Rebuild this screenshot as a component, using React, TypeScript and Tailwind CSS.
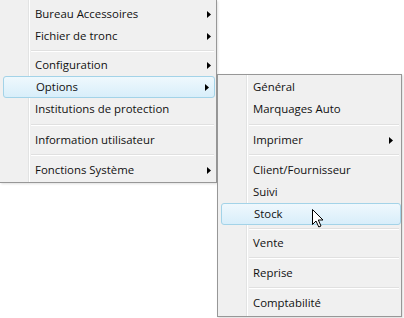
import { FC } from 'react';

type Entry = { label?: string; sub?: boolean; active?: boolean; sep?: number };

const mainItems: Entry[] = [
  { label: 'Bureau Accessoires', sub: true },
  { label: 'Fichier de tronc', sub: true },
  { sep: 7 },
  { label: 'Configuration', sub: true },
  { label: 'Options', sub: true, active: true },
  { label: 'Institutions de protection' },
  { sep: 9 },
  { label: 'Information utilisateur' },
  { sep: 8 },
  { label: 'Fonctions Système', sub: true },
];

const optionItems: Entry[] = [
  { label: 'Général' },
  { label: 'Marquages Auto' },
  { sep: 9 },
  { label: 'Imprimer', sub: true },
  { sep: 8 },
  { label: 'Client/Fournisseur' },
  { label: 'Suivi' },
  { label: 'Stock', active: true },
  { sep: 7 },
  { label: 'Vente' },
  { sep: 8 },
  { label: 'Reprise' },
  { sep: 8 },
  { label: 'Comptabilité' },
];

const SubArrow: FC = () => (
  <svg width="4" height="7" viewBox="0 0 4 7" className="shrink-0">
    <polygon points="0,0 4,3.5 0,7" fill="#000" />
  </svg>
);

const MenuRows: FC<{ items: Entry[]; arrowPad: string; hlMargin: string }> = ({
  items,
  arrowPad,
  hlMargin,
}) => (
  <>
    {items.map((item, i) =>
      item.sep ? (
        <div
          key={i}
          className="flex flex-col justify-center pl-[31px] pr-[2px]"
          style={{ height: item.sep }}
        >
          <div className="h-px bg-[#e0e0e0]" />
          <div className="h-px bg-white" />
        </div>
      ) : item.active ? (
        <div
          key={i}
          className={`flex h-[22px] items-center justify-between rounded-[3px] border border-[#a3d3e8] bg-[linear-gradient(to_bottom,#eff8fd,#d8eefa)] pl-[32px] ${hlMargin} ${arrowPad}`}
        >
          <span>{item.label}</span>
          {item.sub && <SubArrow />}
        </div>
      ) : (
        <div
          key={i}
          className={`flex h-[22px] items-center justify-between pl-[35px] ${arrowPad}`}
        >
          <span>{item.label}</span>
          {item.sub && <SubArrow />}
        </div>
      ),
    )}
  </>
);

const Cursor: FC = () => (
  <svg
    width="13"
    height="20"
    viewBox="0 0 13 20"
    className="absolute left-[311px] top-[208px]"
  >
    <path
      d="M1.5 1.5 L1.5 16.5 L5 13 L7.8 19 L10 18 L7.3 12 L12 12 Z"
      fill="#fff"
      stroke="#000"
      strokeWidth="1"
      strokeLinejoin="miter"
    />
  </svg>
);

const App: FC = () => {
  return (
    <div
      className="relative h-[318px] w-[404px] overflow-hidden bg-white text-[11.4px] leading-[22px] text-[#111]"
      style={{ fontFamily: '"Open Sans", "Noto Sans", sans-serif' }}
    >
      <div className="w-[217px] border-b border-r border-[#979797] bg-[linear-gradient(to_right,#f0f0f0_28px,#e2e3e3_28px,#e2e3e3_29px,#ffffff_29px,#ffffff_30px,#f0f0f0_30px)] pb-px pt-[3px] shadow-[1px_1px_2px_rgba(0,0,0,0.12)]">
        <MenuRows items={mainItems} arrowPad="pr-[5px]" hlMargin="ml-[3px] mr-px" />
      </div>

      <div className="absolute left-[217px] top-[74px] h-[243px] w-[185px] border border-[#979797] bg-[linear-gradient(to_right,#f0f0f0_28px,#e2e3e3_28px,#e2e3e3_29px,#ffffff_29px,#ffffff_30px,#f0f0f0_30px)] py-px shadow-[1px_1px_2px_rgba(0,0,0,0.15)]">
        <MenuRows items={optionItems} arrowPad="pr-[8px]" hlMargin="ml-[3px] mr-0" />
      </div>

      <Cursor />
    </div>
  );
};

export default App;
